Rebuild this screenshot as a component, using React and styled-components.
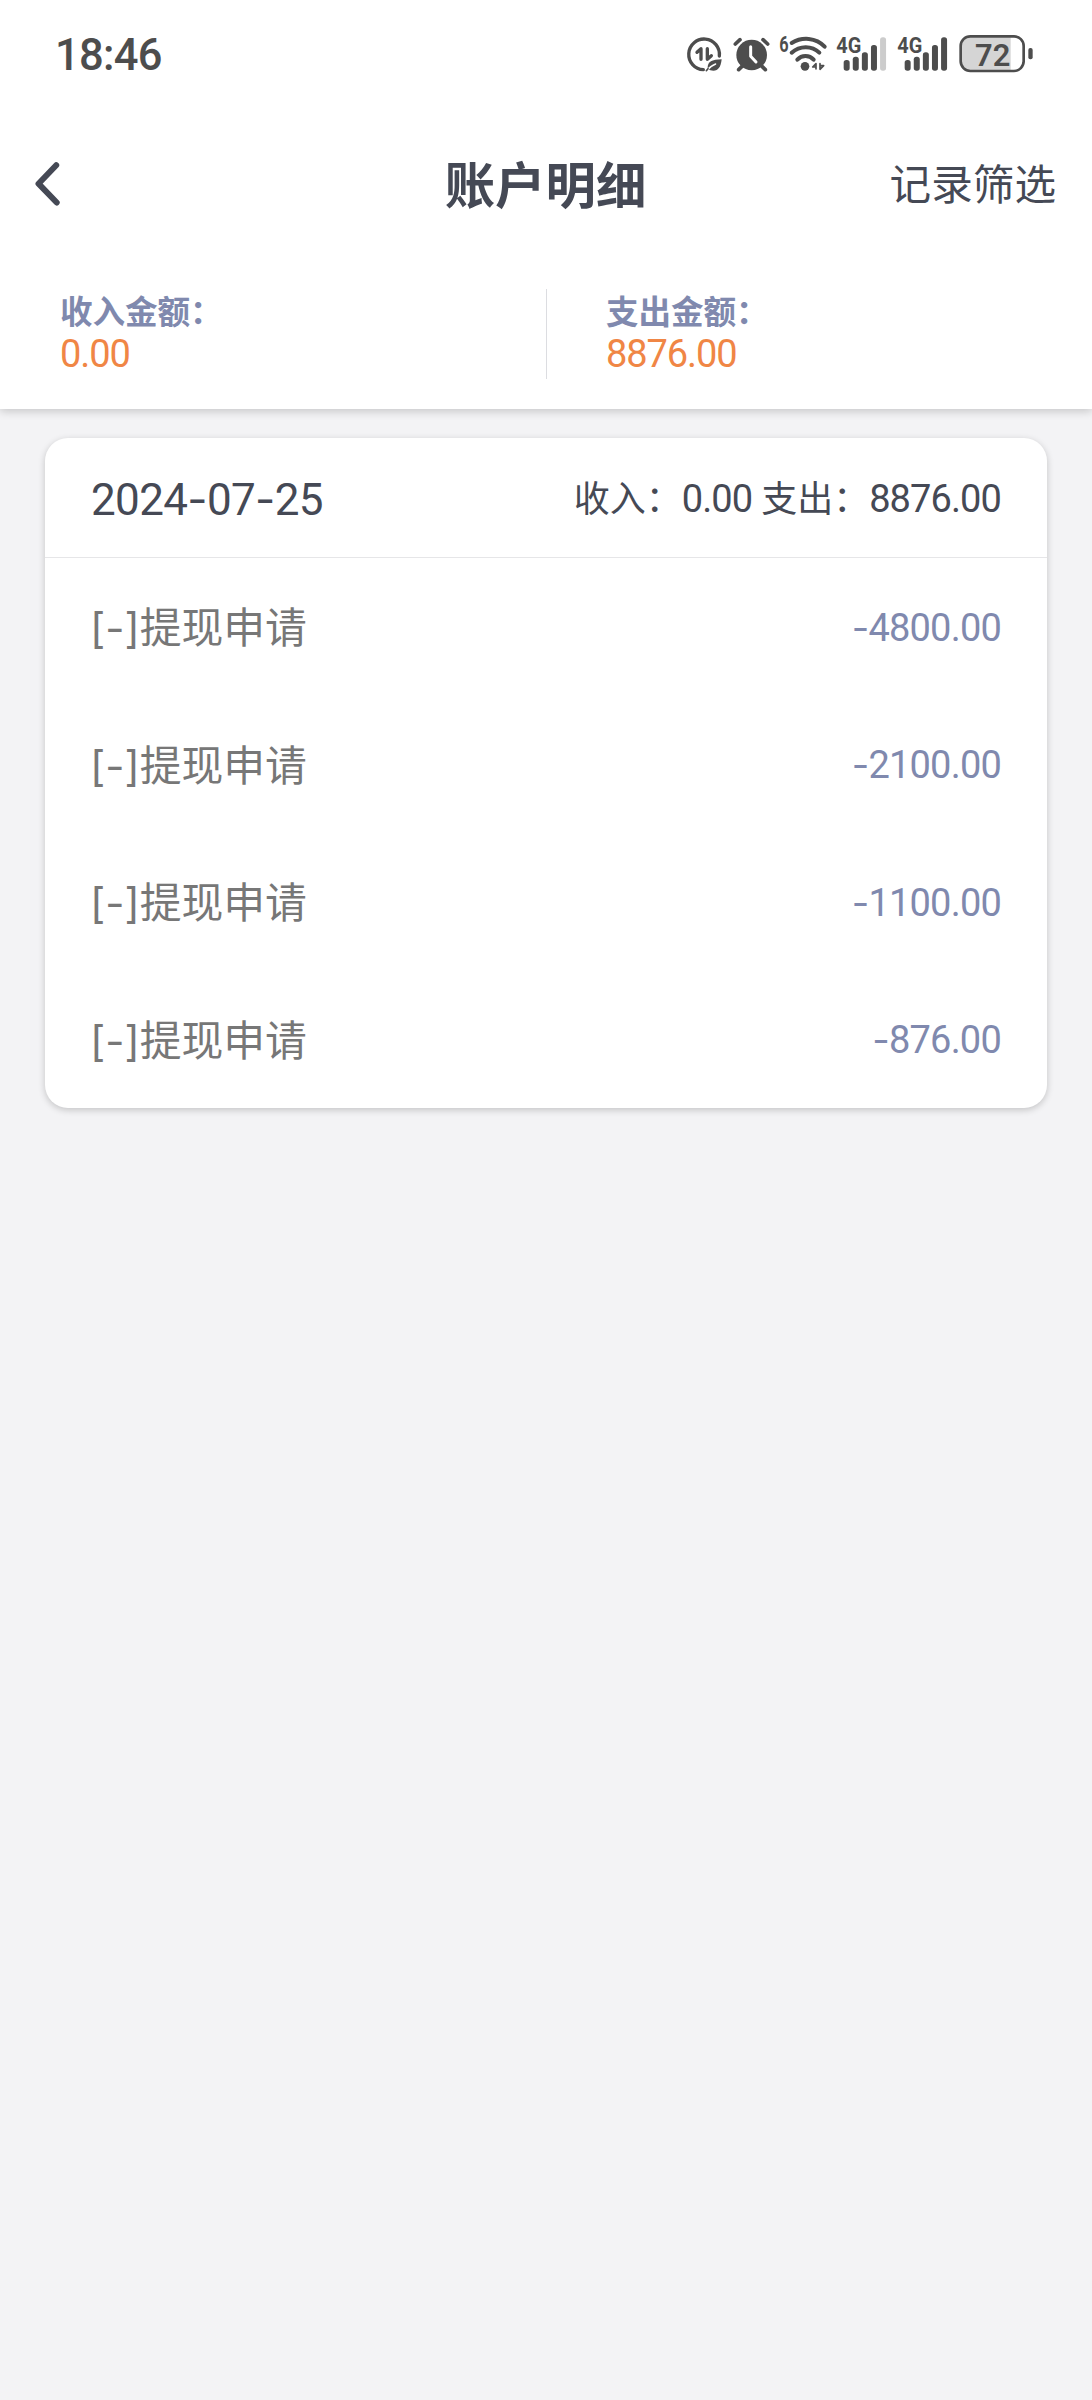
import styled, { createGlobalStyle } from "styled-components";

const GlobalStyle = createGlobalStyle`
  * {
    box-sizing: border-box;
  }
  body {
    margin: 0;
    background: #f3f3f5;
    color: #454955;
    font-family: Roboto, "Noto Sans CJK SC", sans-serif;
  }
`;

const Container = styled.div`
  min-height: 2400px;
  background: #f3f3f5;
`;

const Top = styled.header`
  background: #fff;
  box-shadow: 0 2px 9px rgba(0, 0, 0, 0.2);
`;

const StatusBar = styled.div`
  height: 105px;
  padding: 0 58px 0 55px;
  display: flex;
  justify-content: space-between;
  align-items: center;
`;

const Time = styled.span`
  padding-top: 7px;
  font-size: 43.5px;
  line-height: 50px;
  font-weight: 500;
  letter-spacing: -0.7px;
  color: #4d4d4d;
`;

const StatusIcons = styled.div`
  display: flex;
  gap: 8px;
`;

const Icon = styled.svg`
  display: block;
  width: ${({ $width }) => $width}px;
  height: 45px;
  fill: none;
  stroke: #4d4d4d;
  stroke-linecap: round;
  stroke-linejoin: round;

  text {
    fill: #4d4d4d;
    stroke: none;
    font-family: Roboto, sans-serif;
  }
`;

const NavBar = styled.div`
  height: 160px;
  padding: 0 36px 0 32px;
  display: grid;
  grid-template-columns: 1fr auto 1fr;
  align-items: center;
`;

const BackButton = styled.button`
  width: 40px;
  padding: 0;
  border: 0;
  background: none;

  svg {
    display: block;
    width: 30px;
    height: 48px;
  }
`;

const Title = styled.h1`
  margin: 0;
  padding: 3px 0 0 3px;
  font-size: 50.4px;
  line-height: 60px;
  font-weight: 700;
`;

const FilterLink = styled.span`
  justify-self: end;
  padding-top: 1px;
  font-size: 41.6px;
  line-height: 60px;
`;

const Summary = styled.div`
  height: 144px;
  padding: 24px 0 30px;
  display: flex;
`;

const SummaryItem = styled.div`
  flex: 1;
  padding: 4px 0 0 60px;

  & + & {
    padding-left: 59px;
    border-left: 1px solid #dcdde1;
  }
`;

const Label = styled.div`
  font-size: 32.6px;
  line-height: 41px;
  font-weight: 700;
  letter-spacing: -0.1px;
  color: #8089ae;
`;

const Total = styled.div`
  font-size: 38px;
  line-height: 41px;
  letter-spacing: -1.1px;
  color: #f08645;
`;

const Card = styled.section`
  margin: 29px 45px 0;
  border-radius: 23px;
  background: #fff;
  box-shadow: 0 2px 7px rgba(0, 0, 0, 0.2);
`;

const CardHead = styled.div`
  height: 120px;
  padding: 0 45px 0 46px;
  display: flex;
  justify-content: space-between;
  align-items: center;
  border-bottom: 1px solid #e6e6e8;
`;

const DateText = styled.span`
  padding-top: 2px;
  font-size: 44px;
  letter-spacing: -0.65px;
`;

const DayTotal = styled.span`
  padding: 0 1px 3px 0;
  font-size: 36px;
  white-space: pre;
`;

const Digits = styled.span`
  font-size: 38px;
  letter-spacing: -0.9px;
`;

const Row = styled.div`
  height: 137.5px;
  padding: 0 46px 0 45px;
  display: flex;
  justify-content: space-between;
  align-items: center;
`;

const RowName = styled.span`
  padding-bottom: 3px;
  font-size: 41.8px;
  color: #777;
`;

const Amount = styled.span`
  font-size: 38px;
  letter-spacing: -0.8px;
  color: #8089ae;
`;

// wide hyphen and brackets
const Mark = styled.span`
  font-family: Inter, sans-serif;
`;

const records = [
  { name: "提现申请", amount: "4800.00" },
  { name: "提现申请", amount: "2100.00" },
  { name: "提现申请", amount: "1100.00" },
  { name: "提现申请", amount: "876.00" },
];

const DataSaver = () => (
  <Icon $width={38} viewBox="48 30 114 135">
    <path d="M100 149 A46 46 0 1 1 148 108" strokeWidth="10" />
    <path d="M93 118 V86 L81 97 M112 86 V118 L124 107" strokeWidth="10" />
    <path d="M113 146 C112 124 126 119 155 118 C152 145 142 156 121 151 Z" fill="#4d4d4d" stroke="none" />
    <path d="M109 153 C118 142 126 136 137 132" strokeWidth="4" stroke="#fff" />
    <path d="M109 152 L114 146" strokeWidth="5" />
  </Icon>
);

const Alarm = () => (
  <Icon $width={38} viewBox="186 30 114 135">
    <path d="M196 72 L210 59 M279 59 L293 72" strokeWidth="11" />
    <path d="M206 149 L216 139 M286 149 L276 139" strokeWidth="11" />
    <circle cx="245" cy="105" r="46" fill="#4d4d4d" stroke="none" />
    <path d="M242 80 V109 L258 126" strokeWidth="9" stroke="#fff" />
  </Icon>
);

const Wifi = () => (
  <Icon $width={50} viewBox="324 30 150 135">
    <text x="328" y="95" fontSize="66" fontWeight="700" textLength="28" lengthAdjust="spacingAndGlyphs">6</text>
    <path d="M365 69 C396 50 438 52 464 80" strokeWidth="12" />
    <path d="M365 98 C389 76 426 76 448 98" strokeWidth="12" />
    <path d="M382 119 C395 104 418 104 431 119" strokeWidth="12" />
    <circle cx="405" cy="139" r="13" fill="#4d4d4d" stroke="none" />
    <path d="M438 147 V131 L428 141 H438 M450 131 V148 L461 137 H450" strokeWidth="5" />
  </Icon>
);

const bars = [120, 110, 97, 75, 52];

const Signal = ({ level }) => (
  <Icon $width={53} viewBox="48 30 159 135">
    <text x="49" y="99" fontSize="66" fontWeight="700" textLength="75" lengthAdjust="spacingAndGlyphs">4G</text>
    {bars.map((top, i) => (
      <rect
        key={top}
        x={71 + i * 27.3}
        y={top}
        width="18"
        height={152 - top}
        rx="8"
        fill={i < level ? "#4d4d4d" : "#ccc"}
        stroke="none"
      />
    ))}
  </Icon>
);

const Battery = () => (
  <Icon $width={76} viewBox="414 30 228 135">
    <path d="M572 52 H450 Q424 52 424 78 V124 Q424 150 450 150 H572 Z" fill="#d5d5d5" stroke="none" />
    <rect x="422" y="49" width="189" height="104" rx="29" strokeWidth="8" />
    <rect x="625" y="84" width="13" height="34" rx="6" fill="#4d4d4d" stroke="none" />
    <text x="465" y="137" fontSize="95" fontWeight="600" textLength="106" lengthAdjust="spacingAndGlyphs">72</text>
  </Icon>
);

const App = () => {
  return (
    <Container>
      <GlobalStyle />
      <Top>
        <StatusBar>
          <Time>18:46</Time>
          <StatusIcons>
            <DataSaver />
            <Alarm />
            <Wifi />
            <Signal level={4} />
            <Signal level={5} />
            <Battery />
          </StatusIcons>
        </StatusBar>
        <NavBar>
          <BackButton aria-label="返回">
            <svg viewBox="0 0 30 48" fill="none" stroke="#454955" strokeWidth="6" strokeLinecap="round" strokeLinejoin="round">
              <path d="M24.2 4.2 L6.5 22.7 L24.7 41.5" />
            </svg>
          </BackButton>
          <Title>账户明细</Title>
          <FilterLink>记录筛选</FilterLink>
        </NavBar>
        <Summary>
          <SummaryItem>
            <Label>收入金额：</Label>
            <Total>0.00</Total>
          </SummaryItem>
          <SummaryItem>
            <Label>支出金额：</Label>
            <Total>8876.00</Total>
          </SummaryItem>
        </Summary>
      </Top>
      <Card>
        <CardHead>
          <DateText>
            2024<Mark>-</Mark>07<Mark>-</Mark>25
          </DateText>
          <DayTotal>
            收入：<Digits>0.00</Digits> 支出：<Digits>8876.00</Digits>
          </DayTotal>
        </CardHead>
        {records.map((item) => (
          <Row key={item.amount}>
            <RowName>
              <Mark>[-]</Mark>
              {item.name}
            </RowName>
            <Amount>
              <Mark>-</Mark>
              {item.amount}
            </Amount>
          </Row>
        ))}
      </Card>
    </Container>
  );
};

export default App;
